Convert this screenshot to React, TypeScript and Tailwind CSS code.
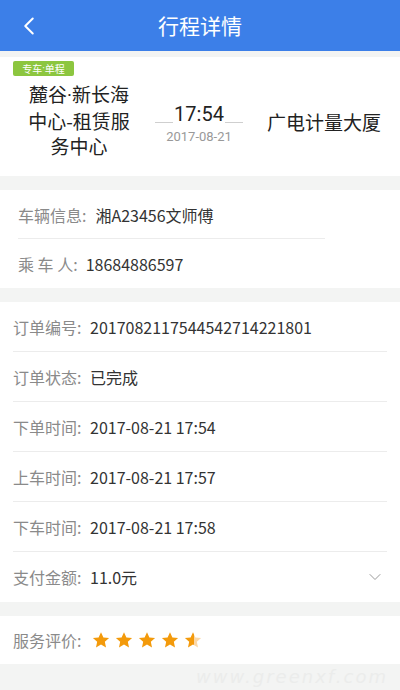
import { ChevronLeft, ChevronDown } from 'lucide-react';

const font = { fontFamily: '"Noto Sans CJK SC", Roboto, sans-serif' };
const roboto = { fontFamily: 'Roboto, sans-serif' };

function Star({ half = false }: { half?: boolean }) {
  return (
    <svg width="18" height="18" viewBox="0 0 24 24">
      <defs>
        <linearGradient id="halfStar" x1="0" x2="1" y1="0" y2="0">
          <stop offset="55%" stopColor="#f39a0b" />
          <stop offset="55%" stopColor="#fbd7a6" />
        </linearGradient>
      </defs>
      <path
        d="M12 1.5l3.2 7 7.6.8-5.7 5.1 1.6 7.5L12 18l-6.7 3.9 1.6-7.5L1.2 9.3l7.6-.8z"
        fill={half ? 'url(#halfStar)' : '#f39a0b'}
      />
    </svg>
  );
}

function Row({ label, value, last = false, chevron = false }: { label: string; value: string; last?: boolean; chevron?: boolean }) {
  return (
    <div className={`h-[50px] flex items-center ${last ? '' : 'border-b border-[#ececec]'}`}>
      <span className="text-[16px] text-[#8a8a8a] w-[77px] shrink-0">{label}</span>
      <span className="text-[16px] text-[#333] flex-1">{value}</span>
      {chevron && <ChevronDown size={20} strokeWidth={1.2} className="text-[#9a9a9a] mr-[2px]" />}
    </div>
  );
}

export default function App() {
  return (
    <div className="w-[400px] h-[690px] bg-[#f3f4f3] overflow-hidden flex flex-col" style={font}>
      {/* Header */}
      <div className="h-[51px] bg-[#3c7fe8] flex items-center relative shrink-0">
        <ChevronLeft size={30} strokeWidth={1.6} className="text-white absolute left-[14px] top-[11px]" />
        <h1 className="w-full text-center text-white text-[21px]">行程详情</h1>
      </div>

      <div className="h-[6px] shrink-0" />

      {/* Trip card */}
      <div className="bg-white h-[119px] shrink-0 pt-[4px]">
        <div className="ml-[13px] w-[61px] h-[15px] bg-[#8cc63f] rounded-[2px] flex items-center justify-center text-white text-[10px] leading-none">
          专车<span style={roboto}>·</span>单程
        </div>
        <div className="flex items-center mt-[5px]">
          <div className="w-[156px] text-center text-[19px] leading-[25px] text-[#222] pl-[2px]">
            麓谷<span style={roboto}>·</span>新长海
            <br />
            中心-租赁服
            <br />
            务中心
          </div>
          <div className="w-[86px] flex flex-col items-center mt-[8px]">
            <div className="flex items-end">
              <span className="w-[18px] h-px bg-[#cfcfcf] mb-[3px]" />
              <span className="text-[20px] leading-[24px] text-[#222] px-[1px]" style={roboto}>17:54</span>
              <span className="w-[18px] h-px bg-[#cfcfcf] mb-[3px]" />
            </div>
            <span className="text-[13px] leading-[16px] text-[#999] mt-[3px]" style={roboto}>2017-08-21</span>
          </div>
          <div className="flex-1 text-center text-[19px] text-[#222] pl-[6px] mt-[5px]">广电计量大厦</div>
        </div>
      </div>

      <div className="h-[14px] shrink-0" />

      {/* Vehicle */}
      <div className="bg-white h-[98px] shrink-0 pl-[18px]">
        <div className="w-[307px] h-[49px] flex items-center border-b border-[#ececec] pt-[2px]">
          <span className="text-[16px] text-[#8a8a8a]">车辆信息:</span>
          <span className="text-[16px] text-[#333] ml-[9px]">湘A23456文师傅</span>
        </div>
        <div className="h-[49px] flex items-center">
          <span className="text-[16px] text-[#8a8a8a]">乘 车 人:</span>
          <span className="text-[16px] text-[#333] ml-[8px]">18684886597</span>
        </div>
      </div>

      <div className="h-[14px] shrink-0" />

      {/* Order */}
      <div className="bg-white shrink-0 px-[13px]">
        <Row label="订单编号:" value="2017082117544542714221801" />
        <Row label="订单状态:" value="已完成" />
        <Row label="下单时间:" value="2017-08-21 17:54" />
        <Row label="上车时间:" value="2017-08-21 17:57" />
        <Row label="下车时间:" value="2017-08-21 17:58" />
        <Row label="支付金额:" value="11.0元" last chevron />
      </div>

      <div className="h-[14px] shrink-0" />

      {/* Rating */}
      <div className="bg-white h-[48px] shrink-0 px-[13px] flex items-center">
        <span className="text-[16px] text-[#8a8a8a] w-[79px]">服务评价:</span>
        <div className="flex gap-[5px]">
          <Star />
          <Star />
          <Star />
          <Star />
          <Star half />
        </div>
      </div>

      <div className="flex-1 flex items-center justify-end pr-[12px]">
        <span className="text-[18px] leading-[22px] italic text-[#ebeceb] tracking-[2px]" style={{ fontFamily: '"DejaVu Sans", sans-serif' }}>
          www.greenxf.com
        </span>
      </div>
    </div>
  );
}
